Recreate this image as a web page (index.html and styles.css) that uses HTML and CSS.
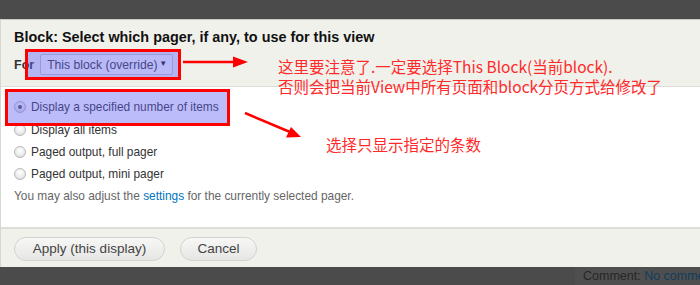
FILE: index.html
```html
<!DOCTYPE html>
<html lang="zh">
<head>
<meta charset="utf-8">
<link rel="stylesheet" href="styles.css">
</head>
<body>
<div class="page">
  <div class="topbar"></div>
  <div class="dialog">
    <div class="header">
      <h2 class="title">Block: Select which pager, if any, to use for this view</h2>
      <div class="for-row">
        <span class="for-label">For</span>
        <span class="select">This block (override)<span class="caret">&#9660;</span></span>
      </div>
    </div>
    <div class="content">
      <div class="option first"><span class="radio checked"></span>Display a specified number of items</div>
      <div class="option"><span class="radio"></span>Display all items</div>
      <div class="option"><span class="radio"></span>Paged output, full pager</div>
      <div class="option"><span class="radio"></span>Paged output, mini pager</div>
      <div class="desc">You may also adjust the <a class="link">settings</a> for the currently selected pager.</div>
    </div>
    <div class="footer">
      <span class="btn btn-apply">Apply (this display)</span>
      <span class="btn btn-cancel">Cancel</span>
    </div>
  </div>
  <div class="bottombar">
    <span class="bb-shade"></span>
    <span class="comment">Comment: <span class="comment-link">No comme</span></span>
  </div>

  <div class="hl hl-for"></div>
  <div class="hl hl-opt"></div>
  <svg class="arrows" width="700" height="285" viewBox="0 0 700 285">
    <line x1="183" y1="62" x2="236" y2="62" stroke="#f00" stroke-width="2.5"/>
    <polygon points="248,62 233,56.5 233,67.5" fill="#f00"/>
    <line x1="245" y1="113" x2="290" y2="132" stroke="#f00" stroke-width="2.5"/>
    <polygon points="301,137 286,137.5 291,127" fill="#f00"/>
  </svg>
  <div class="note note1">这里要注意了.一定要选择This Block(当前block).<br>否则会把当前View中所有页面和block分页方式给修改了</div>
  <div class="note note2">选择只显示指定的条数</div>
</div>
</body>
</html>
```
FILE: styles.css
```css
html, body {
  margin: 0;
  padding: 0;
}
body {
  background: #4b4b4b;
  font-family: "Liberation Sans", Arial, sans-serif;
}
.page {
  position: relative;
  width: 700px;
  height: 285px;
  overflow: hidden;
  display: flex;
  flex-direction: column;
}
.topbar {
  height: 19px;
  background: #4b4b4b;
  flex: none;
}
.dialog {
  flex: none;
  background: #f1f1ec;
  border-top: 1px solid #c9c9c4;
  border-left: 1px solid #d6d6d2;
  display: flex;
  flex-direction: column;
}
.header {
  height: 66px;
  padding: 9px 0 0 13px;
  box-sizing: border-box;
}
.title {
  margin: 0;
  font-size: 14.4px;
  line-height: 17px;
  font-weight: bold;
  color: #111;
}
.for-row {
  margin-top: 8px;
  display: flex;
  align-items: center;
  gap: 6px;
}
.for-label {
  font-size: 12.5px;
  font-weight: bold;
  color: #333;
}
.select {
  display: flex;
  align-items: center;
  width: 133px;
  height: 21px;
  box-sizing: border-box;
  padding-left: 6px;
  border: 1px solid #c4c4c8;
  border-radius: 2px;
  background: #fafafa;
  font-size: 12.2px;
  color: #333;
  position: relative;
}
.caret {
  position: absolute;
  right: 5px;
  top: 4px;
  font-size: 8px;
  color: #111;
}
.content {
  background: #fff;
  border-top: 1px solid #dcdcd8;
  height: 141px;
  box-sizing: border-box;
  padding: 9px 0 0 13px;
}
.option {
  display: flex;
  align-items: center;
  height: 22px;
  font-size: 11.9px;
  color: #333;
}
.option.first {
  margin-bottom: 1px;
}
.radio {
  width: 12px;
  height: 12px;
  border-radius: 50%;
  box-sizing: border-box;
  border: 1px solid #b8b8b8;
  background: radial-gradient(circle at 50% 35%, #ffffff 0%, #ececec 55%, #d2d2d2 100%);
  margin-right: 5px;
  position: relative;
  flex: none;
}
.radio.checked::after {
  content: "";
  position: absolute;
  left: 3px;
  top: 3px;
  width: 4px;
  height: 4px;
  border-radius: 50%;
  background: #555;
}
.desc {
  height: 22px;
  line-height: 22px;
  font-size: 11.9px;
  color: #666;
}
.link {
  color: #0074bd;
}
.footer {
  border-top: 2px solid #dcdcd8;
  height: 40px;
  box-sizing: border-box;
  padding: 8px 0 0 13px;
  display: flex;
  gap: 15px;
  align-items: flex-start;
}
.btn {
  height: 24px;
  box-sizing: border-box;
  border: 1px solid #d2d2d0;
  border-radius: 12px;
  background: linear-gradient(#f7f7f6, #e6e6e4);
  font-size: 13.5px;
  line-height: 22px;
  color: #444;
  text-align: center;
}
.btn-apply {
  width: 151px;
}
.btn-cancel {
  width: 77px;
}
.bottombar {
  flex: 1;
  background: #4b4b4b;
  position: relative;
  display: flex;
  justify-content: flex-end;
}
.bb-shade {
  position: absolute;
  left: 575px;
  top: 0;
  right: 0;
  bottom: 0;
  background: #4f4f4f;
}
.comment {
  position: relative;
  width: 117px;
  font-size: 12.5px;
  line-height: 18px;
  color: #262626;
  white-space: nowrap;
  overflow: hidden;
}
.comment-link {
  color: #123d5c;
}
.hl {
  position: absolute;
  box-sizing: border-box;
  border: 3px solid #ff0000;
  background: rgba(95, 95, 245, 0.42);
}
.hl-for {
  left: 25px;
  top: 49px;
  width: 156px;
  height: 31px;
}
.hl-opt {
  left: 5px;
  top: 89px;
  width: 225px;
  height: 37px;
}
.arrows {
  position: absolute;
  left: 0;
  top: 0;
}
.note {
  position: absolute;
  color: #ff2a2a;
  font-family: "Noto Sans CJK SC", "Noto Sans", sans-serif;
  font-size: 15.5px;
  line-height: 20px;
  white-space: nowrap;
}
.note1 {
  left: 278px;
  top: 56px;
}
.note2 {
  left: 326px;
  top: 134px;
}
```
